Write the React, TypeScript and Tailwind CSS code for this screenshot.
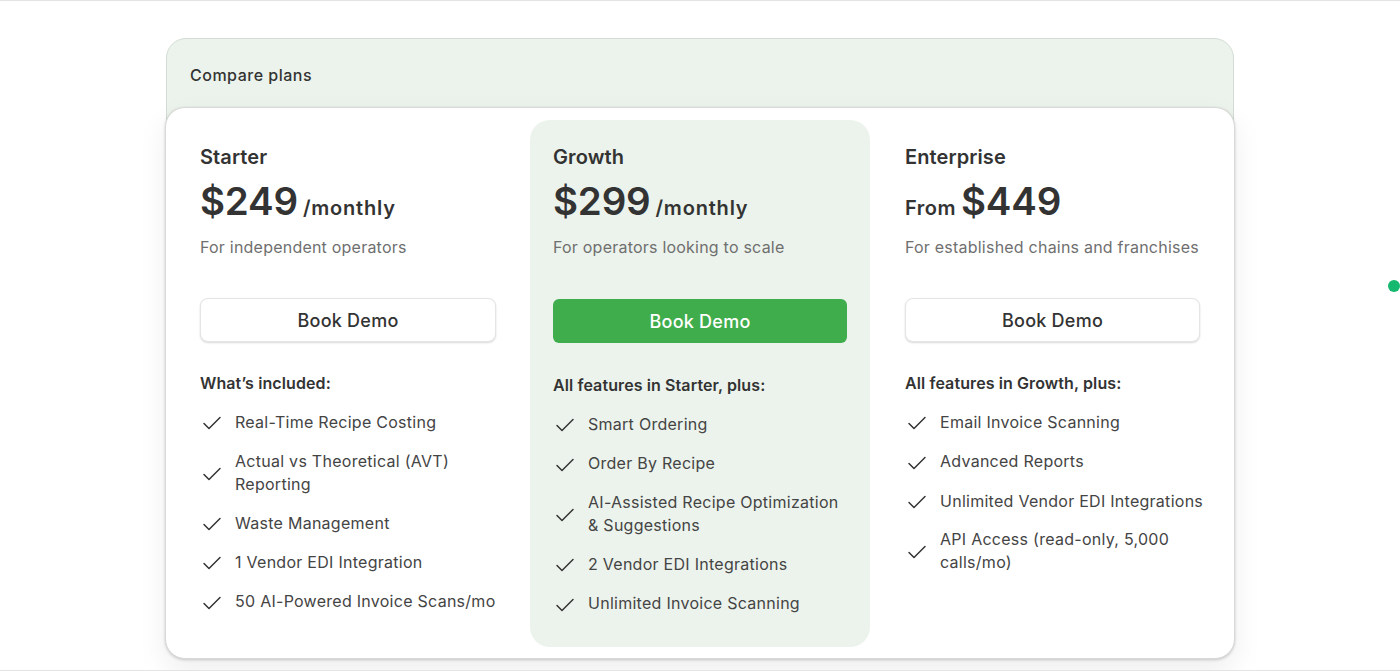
import { Check } from "lucide-react"

const PLANS = [
  {
    name: "Starter",
    prefix: "",
    price: "$249",
    suffix: "/monthly",
    blurb: "For independent operators",
    heading: "What’s included:",
    features: [
      "Real-Time Recipe Costing",
      "Actual vs Theoretical (AVT) Reporting",
      "Waste Management",
      "1 Vendor EDI Integration",
      "50 AI-Powered Invoice Scans/mo",
    ],
  },
  {
    name: "Growth",
    prefix: "",
    price: "$299",
    suffix: "/monthly",
    blurb: "For operators looking to scale",
    heading: "All features in Starter, plus:",
    featured: true,
    features: [
      "Smart Ordering",
      "Order By Recipe",
      "AI-Assisted Recipe Optimization & Suggestions",
      "2 Vendor EDI Integrations",
      "Unlimited Invoice Scanning",
    ],
  },
  {
    name: "Enterprise",
    prefix: "From",
    price: "$449",
    suffix: "",
    blurb: "For established chains and franchises",
    heading: "All features in Growth, plus:",
    features: [
      "Email Invoice Scanning",
      "Advanced Reports",
      "Unlimited Vendor EDI Integrations",
      "API Access (read-only, 5,000 calls/mo)",
    ],
  },
]

function PlanColumn({ plan, className }: { plan: (typeof PLANS)[number]; className: string }) {
  const featured = plan.featured
  return (
    <div className={className}>
      <h3 className="text-[20px] leading-[28px] font-semibold tracking-[0.1px] text-[#333333]">{plan.name}</h3>
      <div className="mt-[2px] flex h-[56px] items-baseline gap-[5px] text-[#333333]">
        {plan.prefix && <span className="text-[20px] font-semibold tracking-[0.5px]">{plan.prefix}</span>}
        <span className="text-[38.5px] leading-[56px] font-semibold tracking-[-0.2px]">{plan.price}</span>
        {plan.suffix && <span className="text-[20px] font-semibold tracking-[0.8px]">{plan.suffix}</span>}
      </div>
      <p className="mt-[6px] text-[16px] leading-[24px] tracking-[0.22px] whitespace-nowrap text-[#6f6f6f]">{plan.blurb}</p>
      {featured ? (
        <button className="mt-[40px] h-[44px] w-full rounded-[6px] bg-[#40ad4c] text-[18px] font-medium tracking-[0.25px] text-white">
          Book Demo
        </button>
      ) : (
        <button className="mt-[39px] h-[44px] w-full rounded-[8px] border border-[#e5e5e5] bg-white text-[18px] font-medium tracking-[0.25px] text-[#333333] shadow-[0_1px_2px_rgba(0,0,0,0.15)]">
          Book Demo
        </button>
      )}
      <p className={`${featured ? "mt-[30px]" : "mt-[29px]"} text-[16px] leading-[24px] font-semibold tracking-[0.1px] text-[#333333]`}>
        {plan.heading}
      </p>
      <ul className="mt-[15.3px] -mr-[4px] flex flex-col gap-[15.4px]">
        {plan.features.map((f) => (
          <li key={f} className="flex items-center gap-[11px]">
            <Check size={24} strokeWidth={1.5} className="shrink-0 translate-y-[1.5px] text-[#333333]" />
            <span className="text-[16px] leading-[23px] tracking-[0.27px] text-[#444444]">{f}</span>
          </li>
        ))}
      </ul>
    </div>
  )
}

const COLUMN_STYLES = [
  "px-[22px] pt-[23px]",
  "rounded-[20px] bg-[#ecf3ec] px-[23px] pt-[23px]",
  "pr-[22px] pl-[23px] pt-[23px]",
]

export default function App() {
  return (
    <div
      className="relative h-[671px] overflow-hidden border-t border-b border-[#e4e4e4] bg-white pt-[37px]"
      style={{ fontFamily: "Inter, sans-serif" }}
    >
      <div className="mx-auto w-[1070px]">
        <div className="mx-[1px] h-[90px] rounded-t-[20px] border border-[#d5dcd5] bg-[#ecf3ec] px-[23px] pt-[23px]">
          <p className="text-[16px] leading-[26px] font-medium tracking-[0.5px] text-[#333333]">Compare plans</p>
        </div>
        <div className="-mt-[21px] grid h-[552px] grid-cols-3 gap-3 rounded-[20px] border border-[#d8d8d8] bg-white px-3 pt-3 pb-[11px] shadow-[0_1px_3px_rgba(0,0,0,0.18),0_12px_30px_rgba(0,0,0,0.07)]">
          {PLANS.map((p, i) => (
            <PlanColumn key={p.name} plan={p} className={COLUMN_STYLES[i]} />
          ))}
        </div>
      </div>
      <div className="absolute top-[279px] right-0 h-3 w-3 rounded-full bg-[#14b86e]" />
    </div>
  )
}
